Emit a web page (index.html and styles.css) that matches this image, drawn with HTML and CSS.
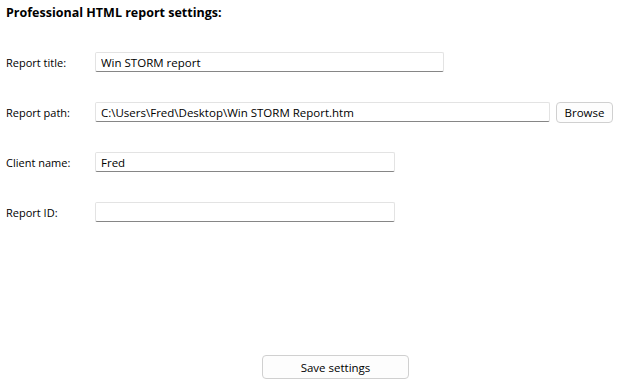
FILE: index.html
```html
<!DOCTYPE html>
<html lang="en">
<head>
    <meta charset="UTF-8">
    <title>Professional HTML report settings</title>
    <link rel="stylesheet" href="styles.css">
</head>
<body>
    <div class="panel">
        <h1>Professional HTML report settings:</h1>
        <div class="form">
            <div class="row">
                <label for="title">Report title:</label>
                <input type="text" id="title" class="short" value="Win STORM report">
            </div>
            <div class="row">
                <label for="path">Report path:</label>
                <input type="text" id="path" class="long" value="C:\Users\Fred\Desktop\Win STORM Report.htm">
                <button class="browse">Browse</button>
            </div>
            <div class="row">
                <label for="client">Client name:</label>
                <input type="text" id="client" class="mid" value="Fred">
            </div>
            <div class="row">
                <label for="rid">Report ID:</label>
                <input type="text" id="rid" class="mid" value="">
            </div>
        </div>
        <div class="footer">
            <button class="save">Save settings</button>
        </div>
    </div>
</body>
</html>
```

FILE: styles.css
```css
body {
    margin: 0;
    padding: 0;
    background: #fff;
    font-family: 'Open Sans', 'Noto Sans', sans-serif;
    font-size: 11px;
    color: #000;
}
.panel {
    width: 621px;
    height: 386px;
    box-sizing: border-box;
    padding: 5px 0 0 6px;
    display: flex;
    flex-direction: column;
}
h1 {
    margin: 0;
    font-size: 12.5px;
    font-weight: bold;
    line-height: 16px;
}
.form {
    margin-top: 31px;
    display: flex;
    flex-direction: column;
    gap: 30px;
}
.row {
    display: flex;
    align-items: center;
    height: 20px;
}
label {
    width: 89px;
    flex-shrink: 0;
}
input {
    box-sizing: border-box;
    height: 20px;
    margin: 0;
    padding: 0 0 0 5px;
    border: 1px solid #e3e3e3;
    border-bottom: 1px solid #868686;
    border-radius: 2px;
    background: #fff;
    font: inherit;
    font-size: 11.5px;
    color: #000;
    outline: none;
}
.short { width: 349px; }
.long { width: 455px; }
.mid { width: 300px; }
button {
    box-sizing: border-box;
    margin: 0;
    border: 1px solid #d0d0d0;
    border-radius: 4px;
    background: #fdfdfd;
    font: inherit;
    font-size: 11.5px;
    color: #000;
    padding: 0;
}
.browse {
    width: 57px;
    height: 21px;
    margin-left: 6px;
}
.footer {
    margin-top: auto;
    margin-bottom: 7px;
    display: flex;
    padding-left: 256px;
}
.save {
    width: 147px;
    height: 24px;
}
```
